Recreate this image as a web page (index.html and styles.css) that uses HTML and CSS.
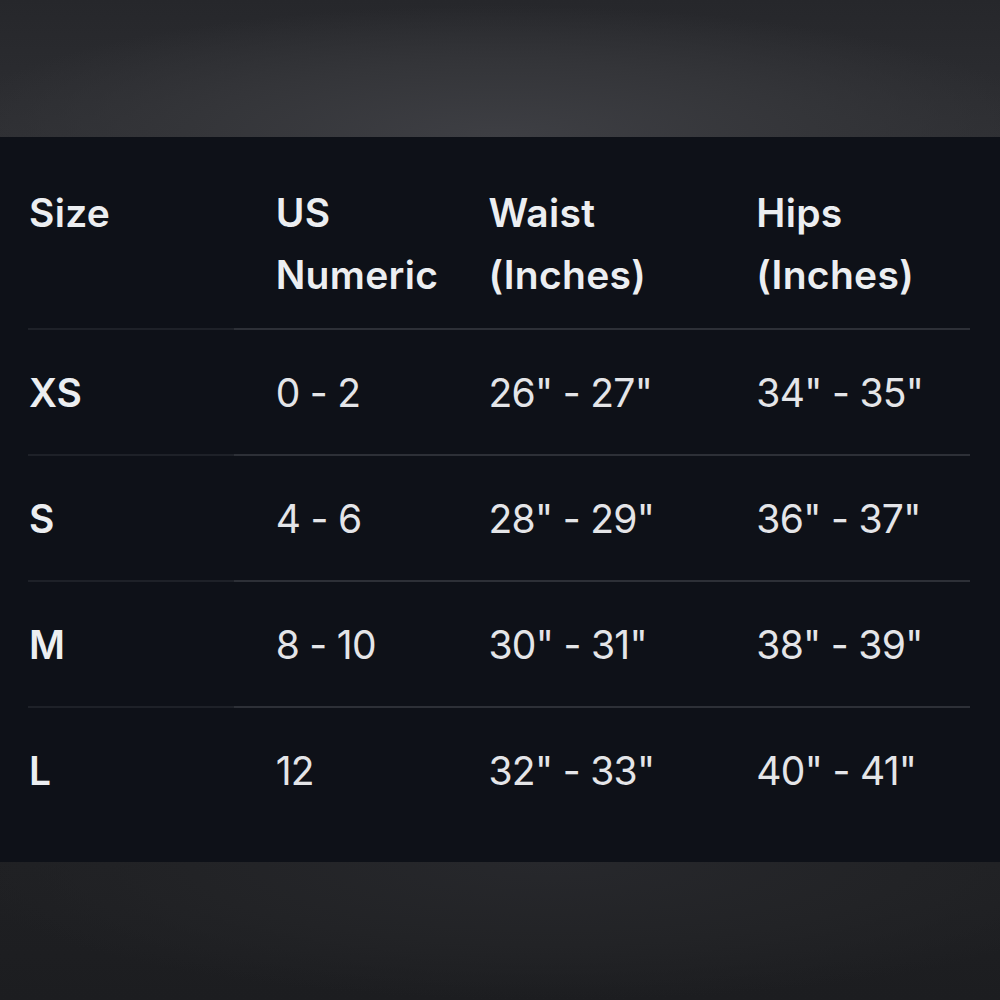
FILE: index.html
```html
<!DOCTYPE html>
<html lang="en">
<head>
<meta charset="utf-8">
<title>Size Chart</title>
<link rel="stylesheet" href="styles.css">
</head>
<body>
<div class="top-bg"></div>
<section class="panel">
  <table class="chart">
    <thead>
      <tr>
        <th class="c1">Size</th>
        <th class="c2">US<br>Numeric</th>
        <th class="c3">Waist<br>(Inches)</th>
        <th class="c4">Hips<br>(Inches)</th>
      </tr>
    </thead>
    <tbody>
      <tr>
        <th class="c1">XS</th>
        <td class="c2">0 - 2</td>
        <td class="c3">26" - 27"</td>
        <td class="c4">34" - 35"</td>
      </tr>
      <tr>
        <th class="c1">S</th>
        <td class="c2">4 - 6</td>
        <td class="c3">28" - 29"</td>
        <td class="c4">36" - 37"</td>
      </tr>
      <tr>
        <th class="c1">M</th>
        <td class="c2">8 - 10</td>
        <td class="c3">30" - 31"</td>
        <td class="c4">38" - 39"</td>
      </tr>
      <tr class="last">
        <th class="c1">L</th>
        <td class="c2">12</td>
        <td class="c3">32" - 33"</td>
        <td class="c4">40" - 41"</td>
      </tr>
    </tbody>
  </table>
</section>
<div class="bottom-bg"></div>
</body>
</html>
```

FILE: styles.css
```css
html, body {
  margin: 0;
  padding: 0;
  background: #1f2023;
}

body {
  width: 1000px;
  height: 1000px;
  overflow: hidden;
  font-family: Inter, "Noto Sans", "Liberation Sans", sans-serif;
}

.top-bg {
  height: 137px;
  background:
    radial-gradient(ellipse 70% 120% at 50% 100%, #3e3f44 0%, #343539 45%, rgba(40,41,45,0) 80%),
    linear-gradient(180deg, #26272b 0%, #2e2f33 100%);
}

.bottom-bg {
  height: 138px;
  background:
    radial-gradient(ellipse 60% 100% at 55% 0%, #27282c 0%, #222326 60%, rgba(30,31,34,0) 100%),
    linear-gradient(180deg, #1f2023 0%, #1c1d20 100%);
}

.panel {
  height: 725px;
  box-sizing: border-box;
  background: #0e1118;
  padding: 0 30px 28px 28px;
}

.chart {
  width: 942px;
  border-collapse: collapse;
  table-layout: fixed;
  color: #e8e9ec;
  font-size: 39px;
}

.chart th,
.chart td {
  text-align: left;
  padding: 0;
  vertical-align: middle;
}

.chart thead th {
  font-weight: 600;
  color: #eceef1;
  line-height: 62px;
  padding-top: 45px;
  padding-bottom: 22px;
  vertical-align: top;
  border-bottom: 2px solid #2d3037;
  letter-spacing: 0.3px;
}

.chart thead th.c1 {
  border-bottom-color: #1e2128;
}

.chart tbody th,
.chart tbody td {
  height: 124px;
  border-bottom: 2px solid #2d3037;
}

.chart tbody th {
  font-weight: 600;
  color: #eceef1;
}

.chart tbody td {
  font-weight: 400;
  color: #e4e5e8;
  letter-spacing: -0.7px;
}

.chart tbody th.c1 {
  border-bottom-color: #1e2128;
}

.chart tbody tr.last th,
.chart tbody tr.last td {
  border-bottom: none;
}

.c1 { width: 204px; padding-left: 1px !important; }
.c2 { width: 212px; padding-left: 42px !important; }
.c3 { width: 267px; }
.c4 { width: 213px; }
```
